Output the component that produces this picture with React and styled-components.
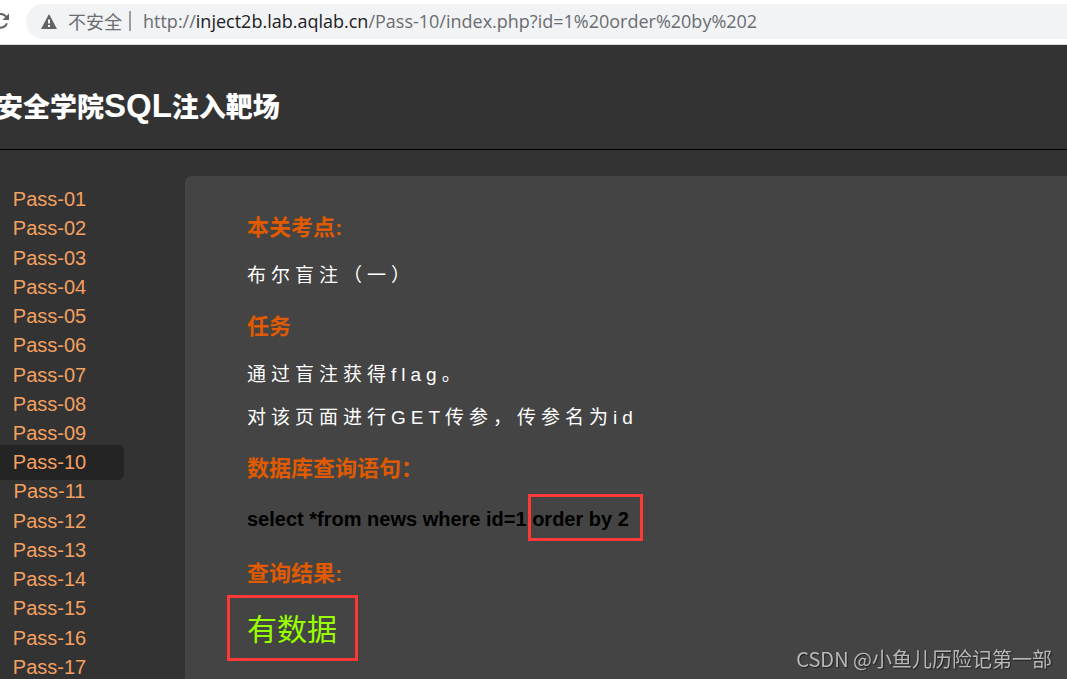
import React from "react";
import styled, { createGlobalStyle } from "styled-components";

const GlobalStyle = createGlobalStyle`
  * { box-sizing: border-box; }
  body {
    margin: 0;
    background: #333;
    font-family: "Liberation Sans", "Noto Sans CJK SC", sans-serif;
    overflow: hidden;
  }
`;

const Page = styled.div`
  display: flex;
  flex-direction: column;
  min-height: 100vh;
`;

const BrowserBar = styled.div`
  display: flex;
  align-items: center;
  gap: 15px;
  height: 45px;
  padding-bottom: 2px;
  background: #fff;
  border-bottom: 1px solid #d6d8da;
`;

const ReloadButton = styled.button`
  display: flex;
  width: 11px;
  height: 20px;
  padding: 0;
  border: 0;
  background: none;
  justify-content: flex-end;
  overflow: hidden;

  svg { flex: none; }
`;

const AddressField = styled.div`
  flex: 1;
  display: flex;
  align-items: center;
  height: 35px;
  padding-left: 15px;
  border-radius: 18px 0 0 18px;
  background: #f1f3f4;
  color: #6a6d71;
  white-space: nowrap;
`;

const Security = styled.span`
  display: flex;
  align-items: center;
  gap: 11px;
  font: 18px/24px "Noto Sans CJK SC", sans-serif;
`;

const Divider = styled.span`
  width: 2px;
  height: 20px;
  margin: 0 12px 0 7px;
  background: #9b9ea1;
`;

const Url = styled.div`
  font: 18px/24px "Open Sans", "Noto Sans", sans-serif;
  outline: none;
`;

const Host = styled.span`
  color: #202124;
`;

const Header = styled.header`
  display: flex;
  align-items: center;
  height: 105px;
  padding-top: 18px;
  border-bottom: 1px solid #000;
`;

const Title = styled.h1`
  margin: 0 0 0 -4px;
  color: #fff;
  font: 900 27px/36px "Noto Sans CJK SC", sans-serif;
  white-space: nowrap;
`;

const Latin = styled.span`
  font: 700 33px/36px "Liberation Sans", sans-serif;
`;

const Body = styled.div`
  flex: 1;
  display: flex;
`;

const Sidebar = styled.nav`
  flex: none;
  width: 185px;
  padding-top: 35px;
`;

const PassList = styled.ul`
  display: grid;
  grid-auto-rows: 1fr;
  width: 149px;
  height: 497px;
  margin: 0 0 0 -25px;
  padding: 0;
  list-style: none;
`;

const PassItem = styled.li`
  display: flex;
  align-items: center;
  min-height: 0;
`;

const PassLink = styled.a`
  flex: 1;
  margin: -6px 0;
  border-radius: 6px;
  background: ${({ $active }) => ($active ? "#242424" : "transparent")};
  color: #f4a060;
  font-size: 20px;
  line-height: 35px;
  text-align: center;
  text-decoration: none;
`;

const Panel = styled.main`
  flex: 1;
  margin-top: 26px;
  padding: 13px 0 0 62px;
  border-radius: 6px 0 0 0;
  background: #444;
  display: flow-root;
`;

const Heading = styled.h2`
  margin: 23px 0 20px;
  color: #e05a00;
  font-size: 22px;
  line-height: 32px;
`;

const Text = styled.p`
  margin: 19px 0;
  color: #fff;
  font-size: 19px;
  line-height: 24px;
  letter-spacing: 5px;
`;

const Query = styled.p`
  margin: 22px 0 27px;
  color: #000;
  font-size: 20px;
  font-weight: 700;
  line-height: 24px;
`;

const Result = styled.p`
  margin: 20px 0 0;
  color: #9f0;
  font-size: 30px;
  line-height: 40px;
`;

const Marked = styled.span`
  position: relative;
  display: inline-block;

  &::after {
    content: "";
    position: absolute;
    inset: ${({ $inset }) => $inset};
    border: 3px solid #ff3838;
  }
`;

const Watermark = styled.div`
  position: fixed;
  right: 15px;
  bottom: 6px;
  color: #b8b8b8;
  font: 20px/28px "Noto Sans CJK SC", sans-serif;
  text-shadow: 1px 1px 1px #222;
`;

const passes = Array.from({ length: 17 }, (_, i) => String(i + 1).padStart(2, "0"));

export default function App() {
  return (
    <Page>
      <GlobalStyle />
      <BrowserBar>
        <ReloadButton aria-label="重新加载">
          <svg width="20" height="20" viewBox="0 0 20 20">
            <path d="M16 12.4A6.8 6.8 0 1 1 14.6 5.1L17 7.5" fill="none" stroke="#5f6368" strokeWidth="2" />
            <path d="M18 2.5V9H11.5Z" fill="#5f6368" />
          </svg>
        </ReloadButton>
        <AddressField>
          <Security>
            <svg width="16" height="15" viewBox="0 0 16 15">
              <path d="M8 0L16 15H0Z" fill="#5f6368" />
              <path d="M7 5.5h2v4H7zM7 11h2v2H7z" fill="#f1f3f4" />
            </svg>
            不安全
          </Security>
          <Divider />
          <Url role="textbox" aria-label="地址" contentEditable suppressContentEditableWarning spellCheck={false}>
            http://<Host>inject2b.lab.aqlab.cn</Host>/Pass-10/index.php?id=1%20order%20by%202
          </Url>
        </AddressField>
      </BrowserBar>
      <Header>
        <Title>安全学院<Latin>SQL</Latin>注入靶场</Title>
      </Header>
      <Body>
        <Sidebar>
          <PassList>
            {passes.map((n) => (
              <PassItem key={n}>
                <PassLink href={`#pass-${n}`} $active={n === "10"}>Pass-{n}</PassLink>
              </PassItem>
            ))}
          </PassList>
        </Sidebar>
        <Panel>
          <Heading>本关考点:</Heading>
          <Text>布尔盲注（一）</Text>
          <Heading>任务</Heading>
          <Text>通过盲注获得flag。</Text>
          <Text>对该页面进行GET传参，传参名为id</Text>
          <Heading>数据库查询语句：</Heading>
          <Query>
            select *from news where id=1 <Marked $inset="-13px -14px -10px -4px">order by 2</Marked>
          </Query>
          <Heading>查询结果:</Heading>
          <Result>
            <Marked $inset="-15px -21px -11px -20px">有数据</Marked>
          </Result>
        </Panel>
      </Body>
      <Watermark>CSDN @小鱼儿历险记第一部</Watermark>
    </Page>
  );
}
